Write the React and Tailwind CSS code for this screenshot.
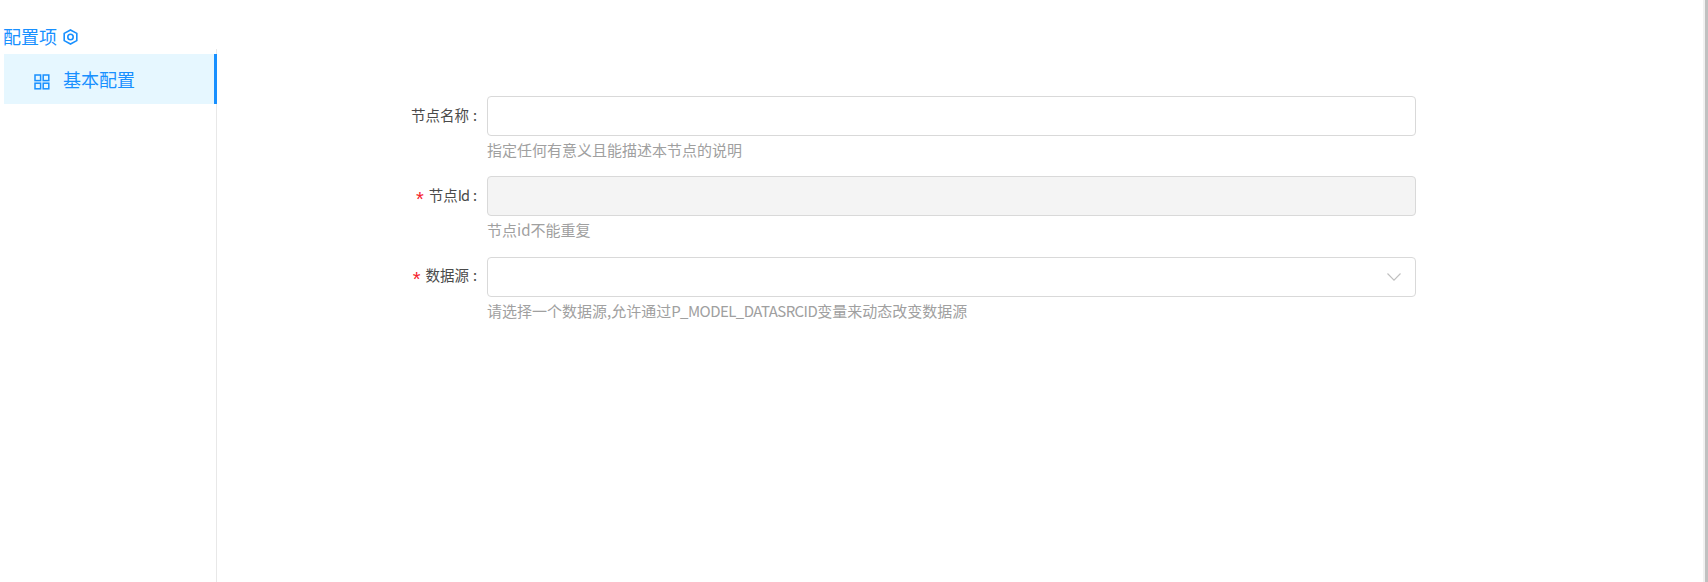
import React from "react";

const fields = [
  { id: "name", label: "节点名称", hint: "指定任何有意义且能描述本节点的说明" },
  {
    id: "nodeId",
    label: (
      <>
        节点<span className="tracking-[-1px]">Id</span>
      </>
    ),
    hint: "节点id不能重复",
    required: true,
    disabled: true,
  },
  {
    id: "source",
    label: "数据源",
    hint: (
      <>
        请选择一个数据源,允许通过<span className="tracking-[-0.55px]">P_MODEL_DATASRCID</span>变量来动态改变数据源
      </>
    ),
    required: true,
    select: true,
  },
];

function HexIcon() {
  return (
    <svg className="mt-[2px]" width="15" height="16" viewBox="0 0 15 16" fill="none" stroke="#1890ff" strokeWidth="1.6">
      <path d="M7.5 1 13.8 4.4V11.6L7.5 15 1.2 11.6V4.4Z" />
      <circle cx="7.5" cy="8" r="2.7" />
    </svg>
  );
}

function GridIcon() {
  return (
    <svg className="mt-[5px]" width="16" height="16" viewBox="0 0 16 16" fill="none" stroke="#1890ff" strokeWidth="1.5">
      <rect x="1" y="1" width="5.6" height="5.6" />
      <rect x="9.2" y="1" width="5.6" height="5.6" />
      <rect x="1" y="9.2" width="5.6" height="5.6" />
      <rect x="9.2" y="9.2" width="5.6" height="5.6" />
    </svg>
  );
}

function Field({ label, hint, required, disabled, select }) {
  return (
    <div className="flex h-[80.3px]">
      <label className="flex h-10 w-[477px] items-center justify-end pb-[3px] text-[14.5px] text-[#4a4a4a]">
        {required && (
          <span className="mr-[5px] translate-y-[4px] font-['Liberation_Sans'] text-[20px] leading-none text-[#f5222d]">
            *
          </span>
        )}
        <span>{label}</span>
        <span className="ml-1">:</span>
      </label>
      <div className="ml-[10px] w-[929px]">
        <div
          className={`flex h-10 items-center justify-end rounded-[4px] border border-[#d9d9d9] pr-[14px] ${
            disabled ? "bg-[#f4f4f4]" : "bg-white"
          }`}
        >
          {select && (
            <svg width="14" height="8" viewBox="0 0 14 8" fill="none" stroke="#bfbfbf" strokeWidth="1.1">
              <path d="M0.5 0.5 7 7.2 13.5 0.5" />
            </svg>
          )}
        </div>
        <p className="mt-[3px] text-[15px] leading-[22px] text-[#a0a0a0]">{hint}</p>
      </div>
    </div>
  );
}

export default function App() {
  return (
    <div
      className="flex h-[582px] overflow-hidden bg-white"
      style={{ fontFamily: '"Noto Sans CJK SC", "Noto Sans", sans-serif' }}
    >
      <aside className="flex w-[217px] shrink-0 flex-col pl-1 pt-[23px]">
        <div className="-ml-px flex h-[26px] items-center gap-[6px] text-[18px] leading-[26px] text-[#1890ff]">
          配置项
          <HexIcon />
        </div>
        <div className="flex-1 border-r border-[#e8e8e8]">
          <div className="-mr-px mt-[5px] flex h-[50px] items-center border-r-[3px] border-[#1890ff] bg-[#e6f7ff] pl-[30px] text-[18px] text-[#1890ff]">
            <GridIcon />
            <span className="ml-[13px]">基本配置</span>
          </div>
        </div>
      </aside>
      <main className="flex-1 pt-[96px]">
        <div className="-ml-[217px]">
          {fields.map(({ id, ...f }) => (
            <Field key={id} {...f} />
          ))}
        </div>
      </main>
      <div className="w-[5px] shrink-0 border-l-2 border-[#f1f1f1] bg-[#c1c1c1]" />
    </div>
  );
}
